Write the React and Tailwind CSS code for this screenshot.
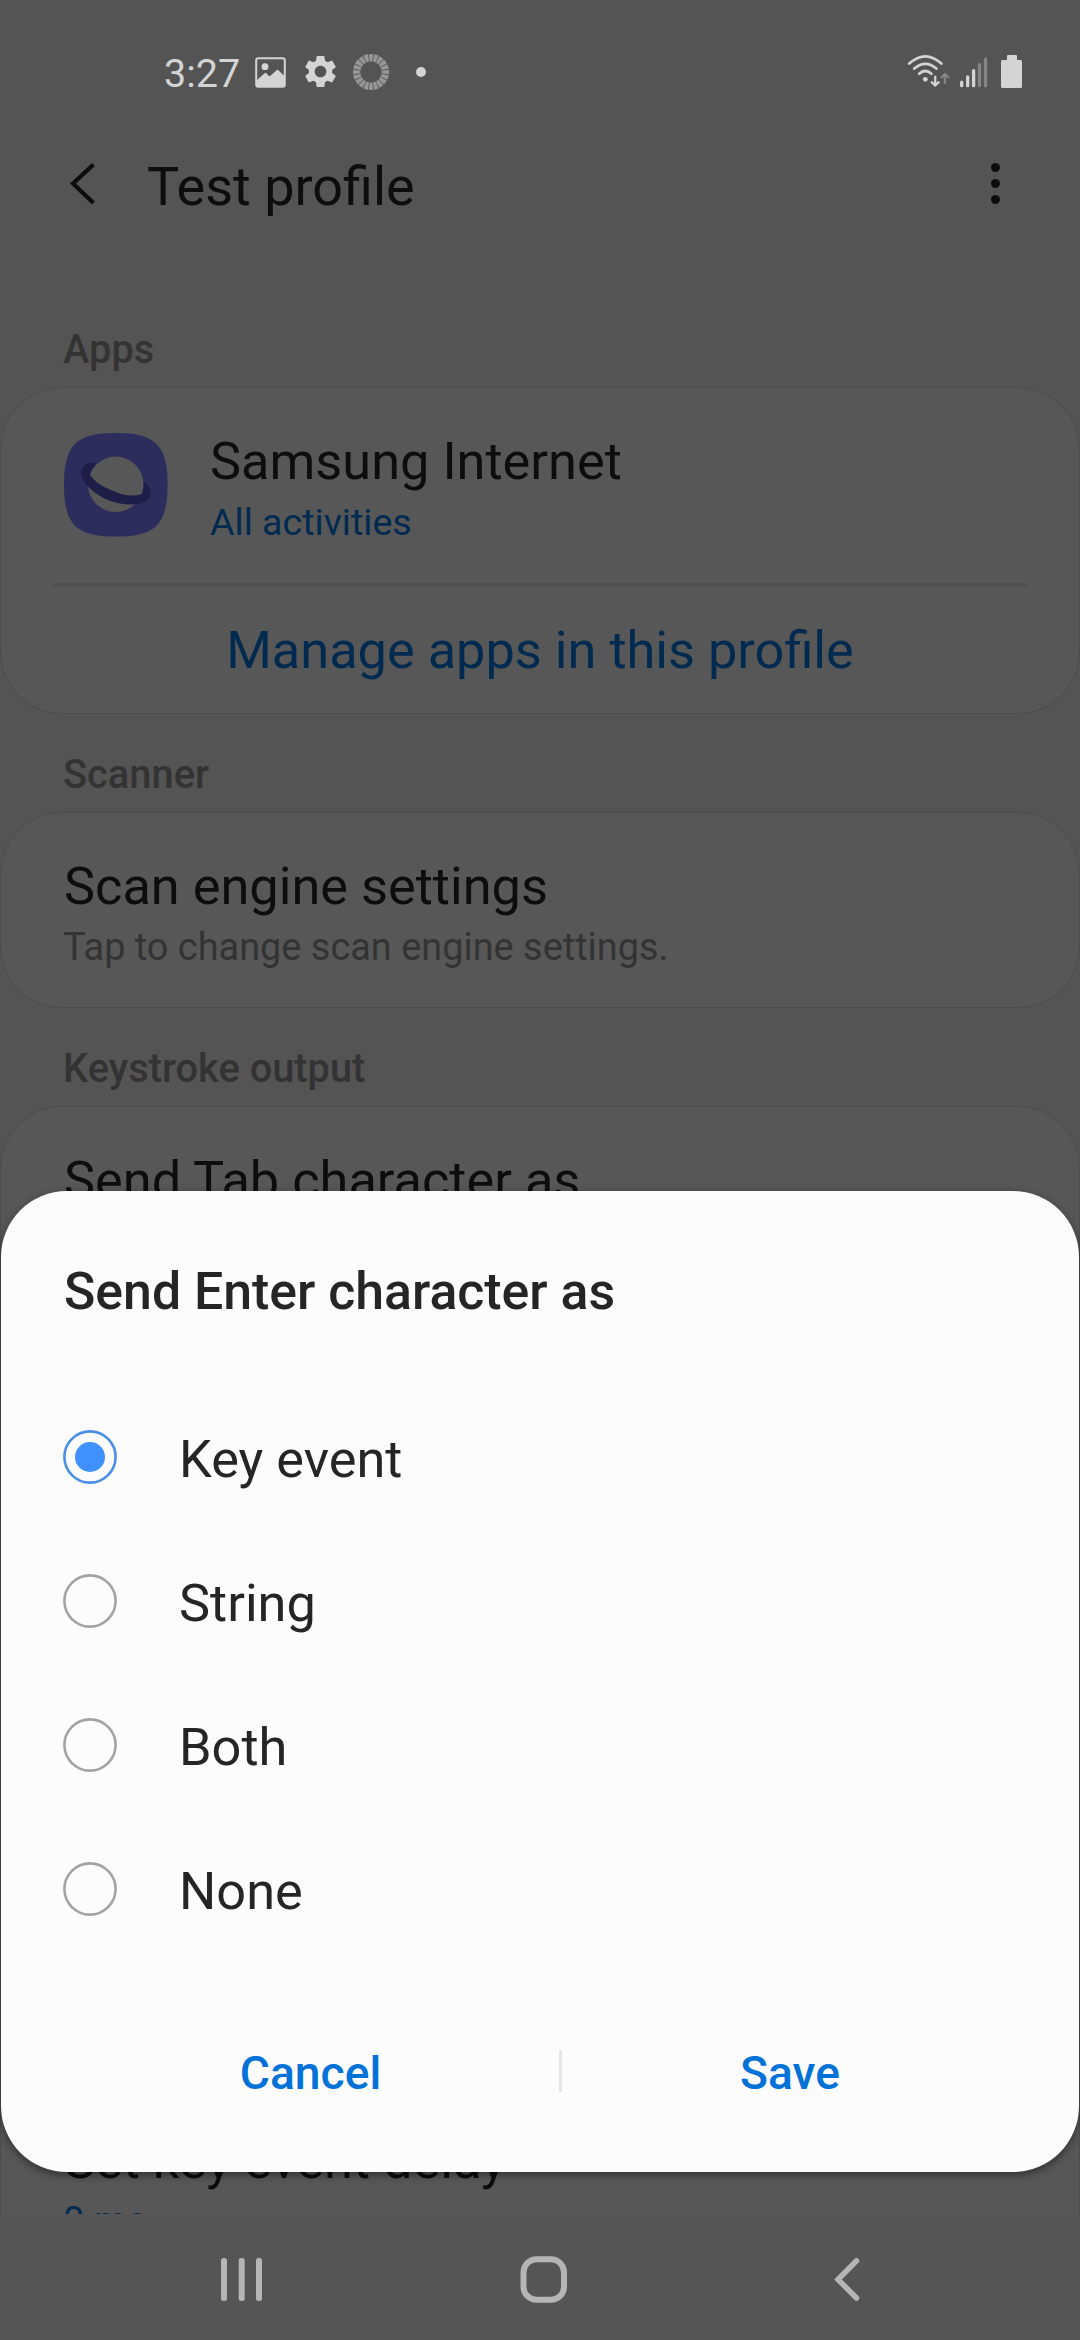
const ROW = "pl-[63px] text-[52.3px] leading-[60px] text-[#0d0d0d]";

function StatusBar() {
  return (
    <div className="flex h-[119px] shrink-0 items-start">
      <span className="ml-[164px] mt-[46px] w-[91px] text-[39.5px] leading-[55px] text-[#d4d4d4]">3:27</span>
      <svg className="mt-[57px] shrink-0" width="31" height="31" viewBox="0 0 31 31">
        <rect x="1.2" y="1.2" width="28.6" height="28.6" rx="2" fill="none" stroke="#d4d4d4" strokeWidth="2" />
        <circle cx="10" cy="9.7" r="3.4" fill="#d4d4d4" />
        <path d="M2 23 L10.5 15.5 L14.5 19.5 L22.5 12.5 L30 19.5 V29.5 H2 Z" fill="#d4d4d4" />
      </svg>
      <svg className="ml-[15px] mt-[52px] shrink-0" width="39" height="39" viewBox="0 0 24 24" fill="#d4d4d4">
        <path d="M19.14 12.94c.04-.3.06-.61.06-.94 0-.32-.02-.64-.07-.94l2.03-1.58a.49.49 0 0 0 .12-.61l-1.92-3.32a.488.488 0 0 0-.59-.22l-2.39.96c-.5-.38-1.03-.7-1.62-.94l-.36-2.54a.484.484 0 0 0-.48-.41h-3.84c-.24 0-.43.17-.47.41l-.36 2.54c-.59.24-1.13.57-1.62.94l-2.39-.96c-.22-.08-.47 0-.59.22L2.74 8.87c-.12.21-.08.47.12.61l2.03 1.58c-.05.3-.09.63-.09.94s.02.64.07.94l-2.03 1.58a.49.49 0 0 0-.12.61l1.92 3.32c.12.22.37.29.59.22l2.39-.96c.5.38 1.03.7 1.62.94l.36 2.54c.05.24.24.41.48.41h3.84c.24 0 .44-.17.47-.41l.36-2.54c.59-.24 1.13-.56 1.62-.94l2.39.96c.22.08.47 0 .59-.22l1.92-3.32c.12-.22.07-.47-.12-.61l-2.01-1.58zM12 15.6c-1.98 0-3.6-1.62-3.6-3.6s1.62-3.6 3.6-3.6 3.6 1.62 3.6 3.6-1.62 3.6-3.6 3.6z" />
      </svg>
      <svg className="ml-[13px] mt-[54px] shrink-0" width="36" height="36" viewBox="0 0 36 36">
        <circle cx="18" cy="18" r="14.3" fill="none" stroke="#969696" strokeWidth="7.4" pathLength="200" strokeDasharray="8.3 1.7" strokeDashoffset="4.15" />
      </svg>
      <span className="ml-[27px] mt-[67px] size-[10px] rounded-full bg-[#d4d4d4]" />
      <svg className="ml-auto mt-[54px] shrink-0" width="43" height="36" viewBox="0 0 43 36" fill="none" stroke="#d4d4d4" strokeWidth="2.7" strokeLinecap="round">
        <path d="M2.2 9.6 Q18.3 -5 34.4 9.6" />
        <path d="M7.2 14.6 Q18.3 5 29.4 14.6" />
        <path d="M12.2 19.8 Q18.3 14.2 24.4 19.8" />
        <circle cx="18.3" cy="25.3" r="2.4" fill="#d4d4d4" stroke="none" />
        <path d="M28.2 22.8 V30 M25 28.5 L28.2 31.5 L31.4 28.5" strokeLinecap="square" strokeWidth="2.3" />
        <path d="M37.9 28.5 V21.5 M34.7 23 L37.9 20 L41.1 23" stroke="#858585" strokeLinecap="square" strokeWidth="2.3" />
      </svg>
      <svg className="ml-[10px] mt-[56px] shrink-0" width="28" height="32" viewBox="0 0 28 32" strokeWidth="3.3" strokeLinecap="round">
        <path d="M1.7 26.2 V29.7 M7.7 21 V29.7 M13.6 14.7 V29.7" stroke="#d4d4d4" />
        <path d="M19.5 8.7 V29.7 M25.5 3.2 V29.7" stroke="#858585" />
      </svg>
      <svg className="ml-[13px] mr-[58px] mt-[55px] shrink-0" width="21" height="33" viewBox="0 0 21 33" fill="#d4d4d4">
        <rect x="6" y="0" width="10" height="8" rx="1" />
        <rect x="0" y="5" width="21" height="28" rx="1.5" />
      </svg>
    </div>
  );
}

function AppIcon() {
  return (
    <svg className="ml-[63px] mt-[45px] shrink-0" width="104" height="104" viewBox="0 0 104 104">
      <path d="M0 51.8 C0 12 12 0 51.8 0 S103.6 12 103.6 51.8 S91.6 103.6 51.8 103.6 S0 91.6 0 51.8 Z" fill="#2d2d5d" />
      <circle cx="51.7" cy="51.3" r="27.7" fill="#575757" />
      <path d="M32.5 30 C22 29 17 34 17 41 C17 49 30 61 43 66.5 C52 70.5 62 72 71 71.3 C80 71 86.5 67 86.3 60 C86 55 84 52 80.3 48.3 C79.8 53 79.3 58 77.7 61 C70 64 60 62.5 52 59 C40 54.5 30 49 26 41.5 C27.5 37 29.5 33.5 32.5 30 Z" fill="#1e1e48" />
    </svg>
  );
}

function Section({ title, first, children, className = "" }) {
  return (
    <section className="shrink-0">
      <h2 className={"flex items-end pb-[10px] pl-[63px] text-[39.8px] font-medium leading-[54px] text-[#333333] " + (first ? "h-[99px]" : "h-[98px]")}>{title}</h2>
      <div className={"rounded-[62px] border border-[#4c4c4c] bg-[#575757] " + className}>{children}</div>
    </section>
  );
}

function Option({ label, selected }) {
  return (
    <label className="flex h-[144px] items-center pl-[62px]">
      <svg width="54" height="54" viewBox="0 0 54 54">
        <circle cx="27" cy="27" r="25.6" fill="none" strokeWidth="2.6" stroke={selected ? "#4a8fe7" : "#a3a3a3"} />
        {selected && <circle cx="27" cy="27" r="15" fill="#3e91ff" />}
      </svg>
      <span className="ml-[62px] mt-[3px] text-[52.3px] leading-[60px] text-[#252525]">{label}</span>
    </label>
  );
}

function Dialog() {
  return (
    <div className="absolute left-px top-[1191px] flex h-[981px] w-[1078px] flex-col rounded-[66px] bg-[#fcfcfc] shadow-[0_3px_8px_rgba(0,0,0,0.45)]">
      <h1 className="mt-[71px] pl-[63px] text-[51.8px] font-medium leading-[60px] text-[#252525]">Send Enter character as</h1>
      <div className="mt-[63px]">
        <Option label="Key event" selected />
        <Option label="String" />
        <Option label="Both" />
        <Option label="None" />
      </div>
      <div className="mt-[83px] flex h-[54px] items-center text-[46.2px] font-medium leading-[54px] text-[#0372d8]">
        <button className="ml-[61px] w-[497px] pt-[4px]">Cancel</button>
        <span className="h-[42px] w-[3px] bg-[#e5e5e5]" />
        <button className="w-[456px] pt-[4px]">Save</button>
      </div>
    </div>
  );
}

function NavBar() {
  return (
    <nav className="flex h-[126px] shrink-0 items-start bg-[#555555] pt-[42px]">
      <svg className="ml-[221px]" width="42" height="46" viewBox="0 0 42 46" fill="#b5b5b5">
        <rect x="0" y="2" width="6" height="43" rx="2.5" />
        <rect x="17.7" y="2" width="6" height="43" rx="2.5" />
        <rect x="35" y="2" width="6" height="43" rx="2.5" />
      </svg>
      <svg className="ml-[257px]" width="47" height="47" viewBox="0 0 47 47" fill="none" stroke="#b5b5b5" strokeWidth="6">
        <rect x="3.5" y="3.2" width="40.5" height="40.5" rx="13" />
      </svg>
      <svg className="ml-[265px]" width="30" height="46" viewBox="0 0 30 46" fill="none" stroke="#b5b5b5" strokeWidth="5.5" strokeLinecap="round">
        <path d="M24.5 4.8 L6 23.5 L24.5 42" />
      </svg>
    </nav>
  );
}

export default function App() {
  return (
    <div className="relative flex h-[2340px] w-[1080px] flex-col overflow-hidden bg-[#545454] font-['Roboto',sans-serif]">
      <StatusBar />
      <header className="flex h-[169px] shrink-0 items-start">
        <svg className="ml-[68px] mt-[42px] shrink-0" width="30" height="46" viewBox="0 0 30 46" fill="none" stroke="#0d0d0d" strokeWidth="4.2">
          <path d="M25.5 3.5 L5 22.5 L25.5 42" />
        </svg>
        <span className="ml-[49px] mt-[36px] text-[54px] leading-[64px] text-[#0d0d0d]">Test profile</span>
        <div className="ml-auto mr-[80px] mt-[44px] flex flex-col gap-[7px]">
          <span className="size-[9px] rounded-full bg-[#0d0d0d]" />
          <span className="size-[9px] rounded-full bg-[#0d0d0d]" />
          <span className="size-[9px] rounded-full bg-[#0d0d0d]" />
        </div>
      </header>
      <main className="flex min-h-0 flex-1 flex-col overflow-hidden">
        <Section title="Apps" first className="h-[327px]">
          <div className="flex h-[195px]">
            <AppIcon />
            <div className="ml-[42px] mt-[43px]">
              <div className="text-[52.3px] leading-[60px] text-[#0d0d0d]">Samsung Internet</div>
              <div className="mt-[7px] text-[37.6px] leading-[48px] text-[#002a50]">All activities</div>
            </div>
          </div>
          <div className="mx-[51px] h-[3px] bg-[#505050]" />
          <div className="mt-[34px] text-center text-[52.3px] leading-[60px] text-[#002a50]">Manage apps in this profile</div>
        </Section>
        <Section title="Scanner" className="h-[196px]">
          <div className={ROW + " pt-[43px]"}>Scan engine settings</div>
          <div className="mt-[7px] pl-[62px] text-[37.9px] leading-[48px] text-[#333333]">Tap to change scan engine settings.</div>
        </Section>
        <Section title="Keystroke output" className="h-[1300px]">
          <div className={ROW + " pt-[43px]"}>Send Tab character as</div>
          <div className={ROW + " pt-[920px]"}>Set key event delay</div>
          <div className="mt-[7px] pl-[62px] text-[38px] leading-[48px] text-[#002a50]">0 ms</div>
        </Section>
      </main>
      <NavBar />
      <Dialog />
    </div>
  );
}
